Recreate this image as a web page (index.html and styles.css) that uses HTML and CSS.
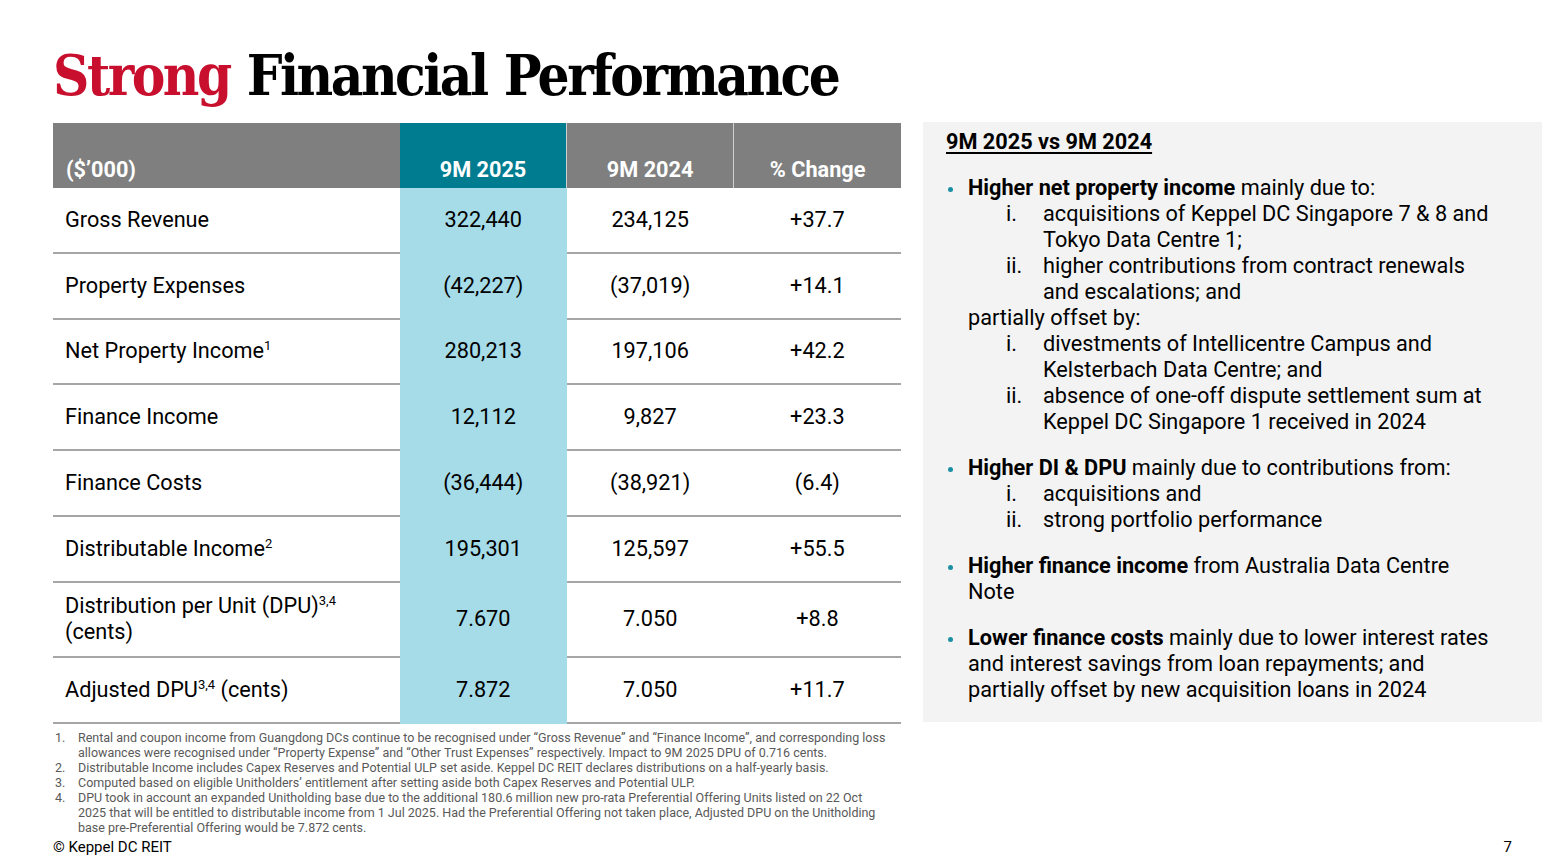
FILE: index.html
```html
<!DOCTYPE html>
<html>
<head>
<meta charset="utf-8">
<link rel="stylesheet" href="styles.css">
</head>
<body>
<div class="slide">
  <h1 class="title"><span class="red">Strong</span> Financial Performance</h1>
  <div class="main">
    <div class="left">
      <table class="fin">
        <thead>
          <tr>
            <th class="lbl">($’000)</th>
            <th class="hl">9M 2025</th>
            <th>9M 2024</th>
            <th>% Change</th>
          </tr>
        </thead>
        <tbody>
          <tr><td class="lbl">Gross Revenue</td><td class="hl">322,440</td><td>234,125</td><td>+37.7</td></tr>
          <tr><td class="lbl">Property Expenses</td><td class="hl">(42,227)</td><td>(37,019)</td><td>+14.1</td></tr>
          <tr><td class="lbl">Net Property Income<sup>1</sup></td><td class="hl">280,213</td><td>197,106</td><td>+42.2</td></tr>
          <tr><td class="lbl">Finance Income</td><td class="hl">12,112</td><td>9,827</td><td>+23.3</td></tr>
          <tr><td class="lbl">Finance Costs</td><td class="hl">(36,444)</td><td>(38,921)</td><td>(6.4)</td></tr>
          <tr><td class="lbl">Distributable Income<sup>2</sup></td><td class="hl">195,301</td><td>125,597</td><td>+55.5</td></tr>
          <tr class="tall"><td class="lbl">Distribution per Unit (DPU)<sup>3,4</sup><br>(cents)</td><td class="hl">7.670</td><td>7.050</td><td>+8.8</td></tr>
          <tr><td class="lbl">Adjusted DPU<sup>3,4</sup> (cents)</td><td class="hl">7.872</td><td>7.050</td><td>+11.7</td></tr>
        </tbody>
      </table>
      <ol class="notes">
        <li>Rental and coupon income from Guangdong DCs continue to be recognised under “Gross Revenue” and “Finance Income”, and corresponding loss allowances were recognised under “Property Expense” and “Other Trust Expenses” respectively. Impact to 9M 2025 DPU of 0.716 cents.</li>
        <li>Distributable Income includes Capex Reserves and Potential ULP set aside. Keppel DC REIT declares distributions on a half-yearly basis.</li>
        <li>Computed based on eligible Unitholders’ entitlement after setting aside both Capex Reserves and Potential ULP.</li>
        <li>DPU took in account an expanded Unitholding base due to the additional 180.6 million new pro-rata Preferential Offering Units listed on 22 Oct 2025 that will be entitled to distributable income from 1 Jul 2025. Had the Preferential Offering not taken place, Adjusted DPU on the Unitholding base pre-Preferential Offering would be 7.872 cents.</li>
      </ol>
    </div>
    <div class="panel">
      <div class="ph">9M 2025 vs 9M 2024</div>
      <ul class="bul">
        <li><b>Higher net property income</b> mainly due to:
          <ol class="rom">
            <li>acquisitions of Keppel DC Singapore 7 &amp; 8 and Tokyo Data Centre 1;</li>
            <li>higher contributions from contract renewals and escalations; and</li>
          </ol>
          partially offset by:
          <ol class="rom">
            <li>divestments of Intellicentre Campus and Kelsterbach Data Centre; and</li>
            <li>absence of one-off dispute settlement sum at Keppel DC Singapore 1 received in 2024</li>
          </ol>
        </li>
        <li><b>Higher DI &amp; DPU</b> mainly due to contributions from:
          <ol class="rom">
            <li>acquisitions and</li>
            <li>strong portfolio performance</li>
          </ol>
        </li>
        <li><b>Higher finance income</b> from Australia Data Centre Note</li>
        <li><b>Lower finance costs</b> mainly due to lower interest rates and interest savings from loan repayments; and partially offset by new acquisition loans in 2024</li>
      </ul>
    </div>
  </div>
  <div class="foot">
    <span>© Keppel DC REIT</span>
    <span>7</span>
  </div>
</div>
</body>
</html>
```

FILE: styles.css
```css
html, body {
  margin: 0;
  padding: 0;
  background: #ffffff;
}
.slide {
  width: 1560px;
  height: 860px;
  box-sizing: border-box;
  padding: 40px 18px 0 53px;
  font-family: Roboto, "Liberation Sans", sans-serif;
  color: #000;
  display: flex;
  flex-direction: column;
}
.title {
  margin: 0;
  height: 83px;
  font-family: "DejaVu Serif", serif;
  font-stretch: condensed;
  font-weight: bold;
  font-size: 56px;
  line-height: 70px;
  letter-spacing: -2.5px;
  word-spacing: 2px;
  color: #000;
}
.red { color: #c8102e; }
.main {
  display: flex;
  gap: 22px;
  align-items: flex-start;
}
.left {
  width: 848px;
}
.fin {
  width: 848px;
  border-collapse: collapse;
  table-layout: fixed;
  font-size: 21.7px;
}
.fin th {
  background: #7f7f7f;
  color: #fff;
  font-weight: bold;
  height: 59px;
  padding: 0 0 6px 0;
  vertical-align: bottom;
  text-align: center;
  border-left: 1px solid #d0d0d0;
  line-height: 24px;
}
.fin th.lbl {
  text-align: left;
  padding-left: 13px;
  border-left: none;
  width: 334px;
}
.fin th.hl { background: #007c91; border-left: none; width: 166px; }
.fin td {
  height: 63.8px;
  text-align: center;
  border-bottom: 2px solid #a6a6a6;
  padding: 0;
  line-height: 26px;
}
.fin td.lbl { text-align: left; padding-left: 12px; }
.fin td.hl {
  background: #a6dbe8;
  border-bottom: 2px solid #a6dbe8;
}
.fin tr.tall td { height: 73px; }
.fin sup {
  font-size: 13px;
  vertical-align: top;
  line-height: 13px;
  position: relative;
  top: 1px;
}
.notes {
  list-style: none;
  counter-reset: n;
  margin: 6px 0 0 0;
  padding: 0 13px 0 25px;
  font-size: 12.5px;
  line-height: 15px;
  color: #595959;
}
.notes li {
  counter-increment: n;
  position: relative;
}
.notes li::before {
  content: counter(n) ".";
  position: absolute;
  left: -23px;
}
.panel {
  flex: 1;
  background: #f3f3f3;
  height: 600px;
  margin-top: -1px;
  box-sizing: border-box;
  padding: 7px 47px 0 23px;
  font-size: 21.7px;
  line-height: 26px;
}
.ph {
  font-weight: bold;
  text-decoration: underline;
  text-underline-offset: 3px;
  text-decoration-thickness: 2px;
  font-size: 21.7px;
  line-height: 26px;
  margin-bottom: 20px;
}
.bul {
  list-style: none;
  margin: 0;
  padding: 0;
}
.bul > li {
  position: relative;
  padding-left: 22px;
  margin-bottom: 20px;
}
.bul > li::before {
  content: "";
  position: absolute;
  left: 2px;
  top: 12px;
  width: 5px;
  height: 5px;
  border-radius: 50%;
  background: #1a8fa3;
}
.rom {
  list-style: none;
  counter-reset: r;
  margin: 0;
  padding: 0 0 0 75px;
}
.rom li {
  counter-increment: r;
  position: relative;
}
.rom li::before {
  content: counter(r, lower-roman) ".";
  position: absolute;
  left: -37px;
}
.foot {
  margin-top: auto;
  height: 21px;
  display: flex;
  justify-content: space-between;
  padding-right: 30px;
  font-size: 15px;
  line-height: 16px;
}
```
